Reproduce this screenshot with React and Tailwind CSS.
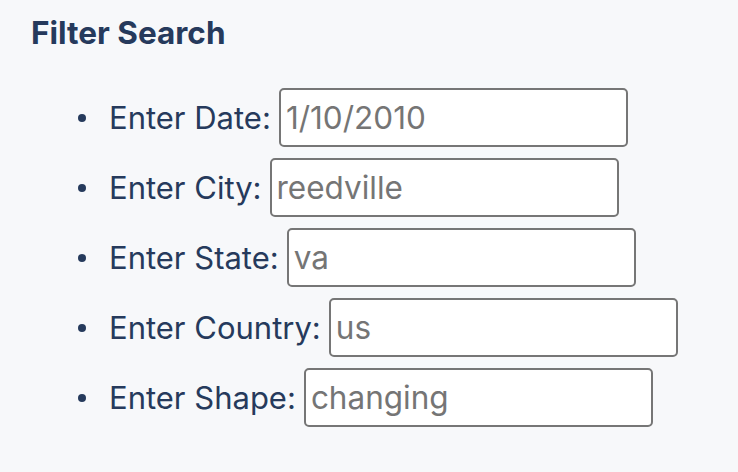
import React from "react";

const rows = [
  ["Enter Date:", "1/10/2010"],
  ["Enter City:", "reedville"],
  ["Enter State:", "va"],
  ["Enter Country:", "us"],
  ["Enter Shape:", "changing"],
];

export default function App() {
  return (
    <div className="min-h-screen w-full bg-[#f7f8fa] px-[31px] pt-[13px] text-[#263a5c]" style={{ fontFamily: "Inter, 'Liberation Sans', sans-serif" }}>
      <h2 className="text-[31.5px] font-bold leading-[40px]">Filter Search</h2>
      <ul className="mt-[35px] flex flex-col gap-[11px] pl-[47px]">
        {rows.map(([label, value]) => (
          <li key={label} className="flex h-[59px] items-center">
            <span className="mr-[23px] h-[8px] w-[8px] rounded-full bg-[#263a5c]" />
            <span className="text-[31px] font-normal leading-none">{label}</span>
            <input
              readOnly
              value={value}
              className="ml-[8px] h-[59px] w-[349px] rounded-[5px] border-2 border-[#767676] bg-white px-[5px] text-[31.5px] font-normal text-[#757575] outline-none"
              style={{ fontFamily: "Inter, 'Liberation Sans', sans-serif" }}
            />
          </li>
        ))}
      </ul>
    </div>
  );
}
